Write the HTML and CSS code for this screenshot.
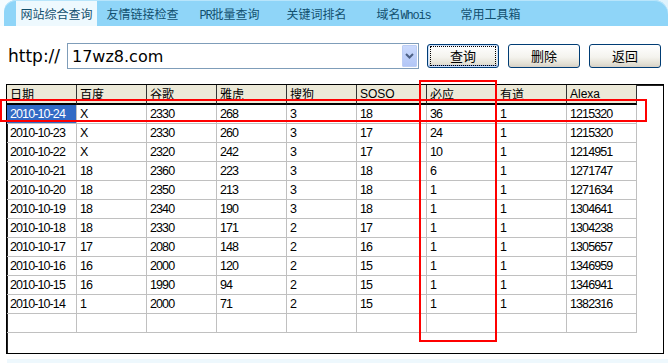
FILE: index.html
```html
<!DOCTYPE html>
<html lang="zh-CN">
<head>
    <meta charset="UTF-8">
    <title>网站综合查询</title>
    <link rel="stylesheet" href="styles.css">
</head>
<body>
<div class="top">
    <ul class="tabs">
        <li class="tabs__item tabs__item--active">网站综合查询</li>
        <li class="tabs__item">友情链接检查</li>
        <li class="tabs__item"><span class="half">PR</span>批量查询</li>
        <li class="tabs__item">关键词排名</li>
        <li class="tabs__item">域名<span class="half">Whois</span></li>
        <li class="tabs__item">常用工具箱</li>
    </ul>
</div>

<form class="query" onsubmit="return false">
    <span class="query__proto">http://</span>
    <div class="combo">
        <span class="combo__text">17wz8.com</span>
        <span class="combo__arrow">
            <svg width="9" height="6" viewBox="0 0 9 6"><polyline points="1,1 4.5,4.5 8,1" fill="none" stroke="#4d6185" stroke-width="2"/></svg>
        </span>
    </div>
    <button class="btn btn--default"><span>查询</span></button>
    <button class="btn"><span>删除</span></button>
    <button class="btn"><span>返回</span></button>
</form>

<div class="grid">
    <table class="grid__table">
        <thead>
        <tr>
            <th>日期</th><th>百度</th><th>谷歌</th><th>雅虎</th><th>搜狗</th>
            <th class="latin">SOSO</th><th>必应</th><th>有道</th><th class="latin">Alexa</th>
        </tr>
        </thead>
        <tbody>
        <tr><td class="selected">2010-10-24</td><td>X</td><td>2330</td><td>268</td><td>3</td><td>18</td><td>36</td><td>1</td><td>1215320</td></tr>
        <tr><td>2010-10-23</td><td>X</td><td>2330</td><td>260</td><td>3</td><td>17</td><td>24</td><td>1</td><td>1215320</td></tr>
        <tr><td>2010-10-22</td><td>X</td><td>2320</td><td>242</td><td>3</td><td>17</td><td>10</td><td>1</td><td>1214951</td></tr>
        <tr><td>2010-10-21</td><td>18</td><td>2360</td><td>223</td><td>3</td><td>18</td><td>6</td><td>1</td><td>1271747</td></tr>
        <tr><td>2010-10-20</td><td>18</td><td>2350</td><td>213</td><td>3</td><td>18</td><td>1</td><td>1</td><td>1271634</td></tr>
        <tr><td>2010-10-19</td><td>18</td><td>2340</td><td>190</td><td>3</td><td>18</td><td>1</td><td>1</td><td>1304641</td></tr>
        <tr><td>2010-10-18</td><td>18</td><td>2330</td><td>171</td><td>2</td><td>17</td><td>1</td><td>1</td><td>1304238</td></tr>
        <tr><td>2010-10-17</td><td>17</td><td>2080</td><td>148</td><td>2</td><td>16</td><td>1</td><td>1</td><td>1305657</td></tr>
        <tr><td>2010-10-16</td><td>16</td><td>2000</td><td>120</td><td>2</td><td>15</td><td>1</td><td>1</td><td>1346959</td></tr>
        <tr><td>2010-10-15</td><td>16</td><td>1990</td><td>94</td><td>2</td><td>15</td><td>1</td><td>1</td><td>1346941</td></tr>
        <tr><td>2010-10-14</td><td>1</td><td>2000</td><td>71</td><td>2</td><td>15</td><td>1</td><td>1</td><td>1382316</td></tr>
        <tr><td></td><td></td><td></td><td></td><td></td><td></td><td></td><td></td><td></td></tr>
        </tbody>
    </table>
</div>

<div class="foot"></div>

<!-- 标注框 -->
<div class="mark mark--row"></div>
<div class="mark mark--col"></div>
</body>
</html>
```

FILE: styles.css
```css
body {
    margin: 0;
    background: #fff;
    font-family: "Noto Sans CJK SC", sans-serif;
    color: #000;
}

.top {
    background: linear-gradient(to right, #f6fcff, #def2fc);
}

.tabs {
    list-style-type: none;
    margin: 0 0 0 4px;
    padding: 0 0 0 8px;
    height: 26px;
    display: flex;
    background: #8fd5f8;
    border-radius: 12px 14px 0 0;
    box-shadow: inset 0 1px 0 #b8e5fb;
}

.tabs__item {
    width: 87px;
    flex: none;
    box-sizing: border-box;
    text-align: center;
    font-size: 12px;
    line-height: 25px;
    padding-top: 1px;
    color: #12506f;
    white-space: nowrap;
}

.tabs__item--active {
    background: #eef9fe;
    background-clip: content-box;
    padding: 1px 2px 0 4px;
}

.half {
    font-family: "Liberation Mono", monospace;
    font-size: 12px;
    letter-spacing: -1.2px;
}

.query {
    display: flex;
    align-items: center;
    margin: 17px 0 0;
    padding-left: 8px;
    height: 26px;
}

.query__proto {
    width: 59px;
    font-family: "DejaVu Sans", sans-serif;
    font-size: 17px;
    line-height: 26px;
}

.combo {
    width: 352px;
    height: 26px;
    box-sizing: border-box;
    border: 1px solid #7f9db9;
    display: flex;
    align-items: center;
    padding: 1px;
}

.combo__text {
    flex: 1;
    padding-left: 3px;
    font-family: "DejaVu Sans", sans-serif;
    font-size: 16px;
}

.combo__arrow {
    width: 15px;
    height: 22px;
    box-sizing: border-box;
    border: 1px solid #bccdf4;
    border-radius: 1px;
    background: linear-gradient(#cbdafd, #b2c6f6);
    display: flex;
    align-items: center;
    justify-content: center;
}

.btn {
    width: 72px;
    height: 24px;
    margin-left: 9px;
    padding: 0;
    box-sizing: border-box;
    border: 1px solid #003c74;
    border-radius: 3px;
    background: linear-gradient(#ffffff, #f4f3ee 55%, #e3e0d4 85%, #d6d0c5);
    font-family: "Noto Sans CJK SC", sans-serif;
    font-size: 13px;
    color: #000;
}

.query .btn:first-of-type {
    margin-left: 8px;
}

.btn span {
    display: block;
    margin: 1px 2px;
    border: 1px dotted transparent;
    line-height: 18px;
}

.btn--default {
    box-shadow: inset 0 0 0 1px #cde0fb, inset 0 -1px 0 1px #7f9ee2;
}

.btn--default span {
    border-color: #000;
}

.grid {
    margin: 15px 0 0 6px;
    width: 658px;
    height: 270px;
    box-sizing: border-box;
    border: 1px solid #000;
    box-shadow: inset 1px 1px 0 #222;
}

.grid__table {
    table-layout: fixed;
    width: 630px;
    border-collapse: separate;
    border-spacing: 0;
    font-family: "Liberation Sans", sans-serif;
    font-size: 12.5px;
    letter-spacing: -0.9px;
}

.grid__table th,
.grid__table td {
    width: 70px;
    box-sizing: border-box;
    padding: 0 3px;
    text-align: left;
    white-space: nowrap;
    overflow: hidden;
}

.grid__table th {
    height: 20px;
    background: #ece9d8;
    border-right: 1px solid #333;
    border-bottom: 2px solid #000;
    font-weight: normal;
    font-size: 12px;
    line-height: 18px;
    letter-spacing: 0;
    font-family: "Noto Sans CJK SC", sans-serif;
}

.grid__table th.latin {
    font-family: "Liberation Sans", sans-serif;
    font-size: 12px;
}

.grid__table td {
    height: 19px;
    line-height: 18px;
    border-right: 1px solid #c0c0c0;
    border-bottom: 1px solid #c0c0c0;
}

.grid__table td.selected {
    background: #316ac5;
    color: #fff;
}

.foot {
    margin: 5px 0 0 7px;
    height: 4px;
    background: #eef8fd;
}

.mark {
    position: absolute;
    box-sizing: border-box;
    border: 2px solid #f00;
}

.mark--row {
    left: 0;
    top: 99px;
    width: 647px;
    height: 23px;
}

.mark--col {
    left: 419px;
    top: 80px;
    width: 78px;
    height: 262px;
}
```
